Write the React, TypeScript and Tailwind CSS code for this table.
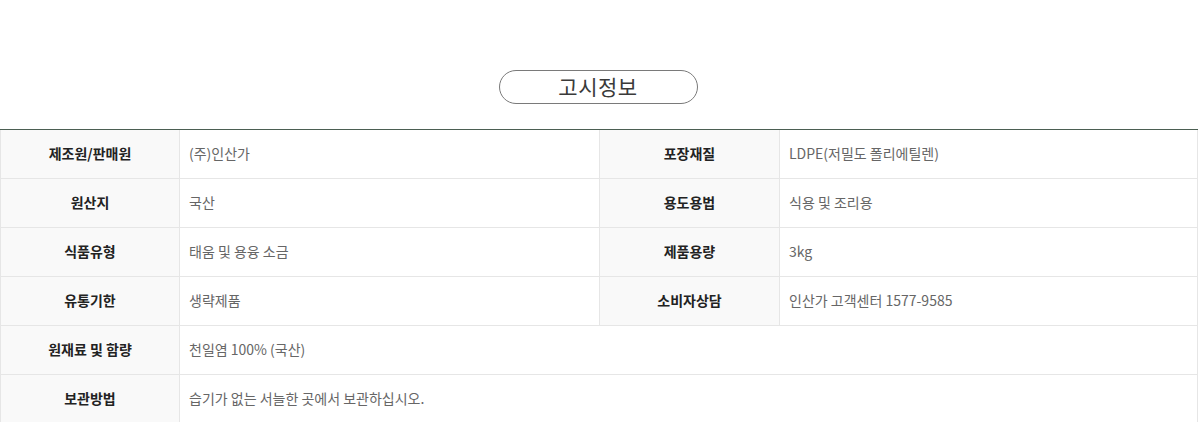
const rows: [string, string, string?, string?][] = [
  ["제조원/판매원", "(주)인산가", "포장재질", "LDPE(저밀도 폴리에틸렌)"],
  ["원산지", "국산", "용도용법", "식용 및 조리용"],
  ["식품유형", "태움 및 용융 소금", "제품용량", "3kg"],
  ["유통기한", "생략제품", "소비자상담", "인산가 고객센터 1577-9585"],
  ["원재료 및 함량", "천일염 100% (국산)"],
  ["보관방법", "습기가 없는 서늘한 곳에서 보관하십시오."],
];

const th =
  "bg-[#f9f9f9] border border-[#e6e6e6] text-center text-[14px] font-bold text-[#222] p-0";
const td =
  "border border-[#e6e6e6] text-left text-[14px] text-[#666] pl-[9px] p-0";

export default function App() {
  return (
    <div
      className="w-[1200px] h-[422px] overflow-hidden bg-white pt-[70px]"
      style={{ fontFamily: '"Noto Sans CJK KR", "Noto Sans", sans-serif' }}
    >
      <div className="flex justify-center pr-[4px]">
        <h2 className="w-[199px] h-[34px] rounded-full border-[1.5px] border-[#7a7a7a] flex items-center justify-center text-[21px] text-[#3a3a3a] tracking-[0.5px]">
          고시정보
        </h2>
      </div>

      <div className="mt-[25px] w-[1198px] border-t border-[#4b5e52]">
        <table className="w-full border-collapse table-fixed">
          <colgroup>
            <col className="w-[179px]" />
            <col className="w-[420px]" />
            <col className="w-[180px]" />
            <col />
          </colgroup>
          <tbody>
            {rows.map(([l1, v1, l2, v2], i) => {
              const top = i === 0 ? " border-t-0" : "";
              return (
                <tr key={l1} className={i === 0 ? "h-[48px]" : "h-[49px]"}>
                  <th className={`${th} border-l-0${top}`}>{l1}</th>
                  {l2 ? (
                    <>
                      <td className={td + top}>{v1}</td>
                      <th className={th + top}>{l2}</th>
                      <td className={`${td} border-r-0${top}`}>{v2}</td>
                    </>
                  ) : (
                    <td className={`${td} border-r-0${top}`} colSpan={3}>
                      {v1}
                    </td>
                  )}
                </tr>
              );
            })}
          </tbody>
        </table>
      </div>
    </div>
  );
}
